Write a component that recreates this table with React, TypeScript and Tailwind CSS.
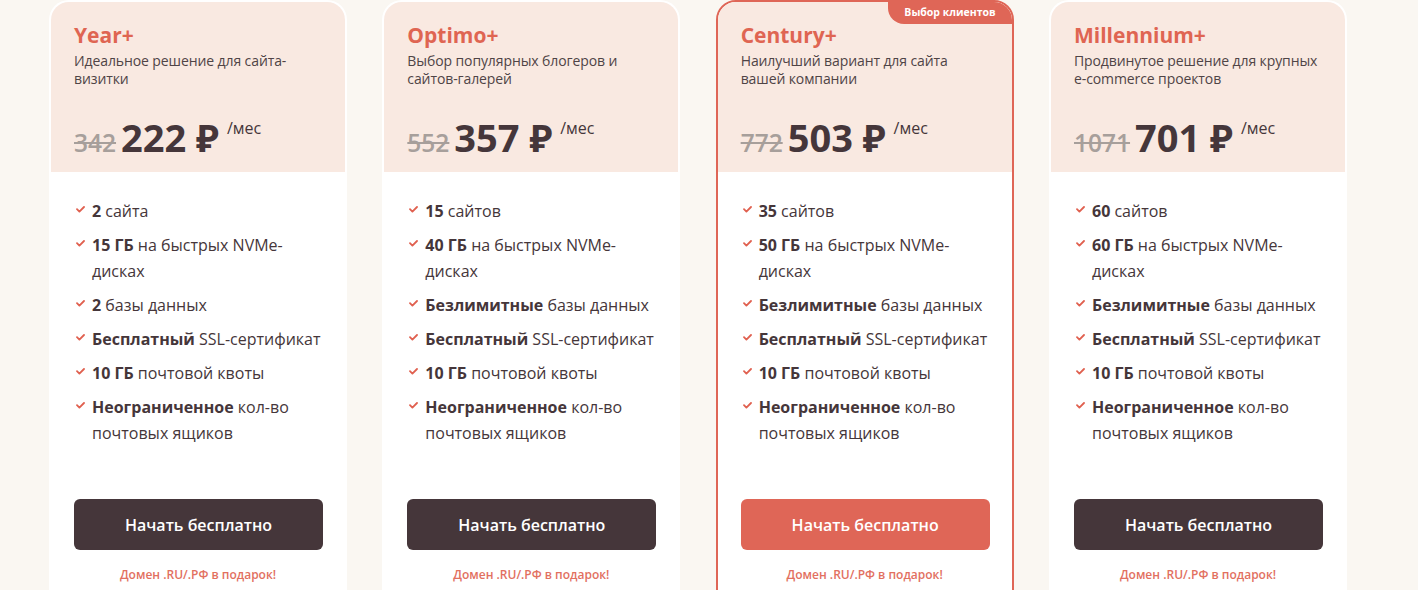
import { memo } from "react";

type Feature = { b: string; t: string };
type Plan = {
	name: string;
	desc: string;
	old: string;
	price: string;
	featured?: boolean;
	features: Feature[];
};

const plans: Plan[] = [
	{
		name: "Year+",
		desc: "Идеальное решение для сайта-визитки",
		old: "342",
		price: "222",
		features: [
			{ b: "2", t: "сайта" },
			{ b: "15 ГБ", t: "на быстрых NVMe-дисках" },
			{ b: "2", t: "базы данных" },
			{ b: "Бесплатный", t: "SSL-сертификат" },
			{ b: "10 ГБ", t: "почтовой квоты" },
			{ b: "Неограниченное", t: "кол-во почтовых ящиков" },
		],
	},
	{
		name: "Optimo+",
		desc: "Выбор популярных блогеров и сайтов-галерей",
		old: "552",
		price: "357",
		features: [
			{ b: "15", t: "сайтов" },
			{ b: "40 ГБ", t: "на быстрых NVMe-дисках" },
			{ b: "Безлимитные", t: "базы данных" },
			{ b: "Бесплатный", t: "SSL-сертификат" },
			{ b: "10 ГБ", t: "почтовой квоты" },
			{ b: "Неограниченное", t: "кол-во почтовых ящиков" },
		],
	},
	{
		name: "Century+",
		desc: "Наилучший вариант для сайта вашей компании",
		old: "772",
		price: "503",
		featured: true,
		features: [
			{ b: "35", t: "сайтов" },
			{ b: "50 ГБ", t: "на быстрых NVMe-дисках" },
			{ b: "Безлимитные", t: "базы данных" },
			{ b: "Бесплатный", t: "SSL-сертификат" },
			{ b: "10 ГБ", t: "почтовой квоты" },
			{ b: "Неограниченное", t: "кол-во почтовых ящиков" },
		],
	},
	{
		name: "Millennium+",
		desc: "Продвинутое решение для крупных e\u2011commerce проектов",
		old: "1071",
		price: "701",
		features: [
			{ b: "60", t: "сайтов" },
			{ b: "60 ГБ", t: "на быстрых NVMe-дисках" },
			{ b: "Безлимитные", t: "базы данных" },
			{ b: "Бесплатный", t: "SSL-сертификат" },
			{ b: "10 ГБ", t: "почтовой квоты" },
			{ b: "Неограниченное", t: "кол-во почтовых ящиков" },
		],
	},
];

const Check = () => (
	<svg width="9" height="7" viewBox="0 0 9 7" className="shrink-0 mt-[8px] ml-[2px]" fill="none">
		<path d="M1 3.2 L3.4 5.6 L8 1" stroke="#e0604f" strokeWidth="1.8" strokeLinecap="round" strokeLinejoin="round" />
	</svg>
);

const Card = ({ plan }: { plan: Plan }) => (
	<div
		className={`relative w-[298px] shrink-0 rounded-[20px] border-2 bg-white overflow-hidden ${
			plan.featured ? "border-[#df6657]" : "border-transparent"
		}`}
	>
		{plan.featured && (
			<div className="absolute top-0 right-0 h-[22px] px-[16px] bg-[#df6657] rounded-bl-[16px] text-white text-[10.5px] font-bold leading-[21px]">
				Выбор клиентов
			</div>
		)}
		{/* Header */}
		<div className="h-[170px] bg-[#f9e9e1] px-[23px] pt-[19px]">
			<h3 className="text-[21px] leading-[28px] font-bold text-[#df6552]">{plan.name}</h3>
			<p className="mt-[3px] text-[14px] leading-[18px] text-[#4f4446] tracking-[-0.1px]">{plan.desc}</p>
			<div className="mt-[26px] flex items-baseline">
				<span className="text-[24.5px] font-semibold text-[#a79f9b] line-through decoration-2 mr-[5px]">
					{plan.old}
				</span>
				<span className="text-[38px] leading-[46px] font-bold text-[#45363a]">{plan.price} ₽</span>
				<span className="self-start mt-[2px] ml-[8px] text-[16px] text-[#45363a]">/мес</span>
			</div>
		</div>
		{/* Body */}
		<div className="px-[23px] pt-[26px] pb-[24px] flex flex-col">
			<ul className="flex flex-col gap-[8px]">
				{plan.features.map((f) => (
					<li key={f.b + f.t} className="flex gap-[7px] text-[16px] leading-[26px] text-[#45363a]">
						<Check />
						<span>
							<b className="font-bold">{f.b}</b> {f.t}
						</span>
					</li>
				))}
			</ul>
			<button
				type="button"
				className={`mt-[53px] h-[51px] w-[249px] rounded-[6px] text-white text-[16px] font-semibold ${
					plan.featured ? "bg-[#df6657]" : "bg-[#45363a]"
				}`}
			>
				Начать бесплатно
			</button>
			<p className="mt-[17px] text-center text-[12px] leading-[16px] font-semibold text-[#e2705f]">
				Домен .RU/.РФ в подарок!
			</p>
		</div>
	</div>
);

const App = () => {
	return (
		<div
			className="h-[590px] overflow-hidden bg-[#faf7f2] pl-[49px] flex gap-[35.33px] items-start"
			style={{ fontFamily: '"Open Sans", "Noto Sans", sans-serif' }}
		>
			{plans.map((p) => (
				<Card key={p.name} plan={p} />
			))}
		</div>
	);
};

export default memo(App);
